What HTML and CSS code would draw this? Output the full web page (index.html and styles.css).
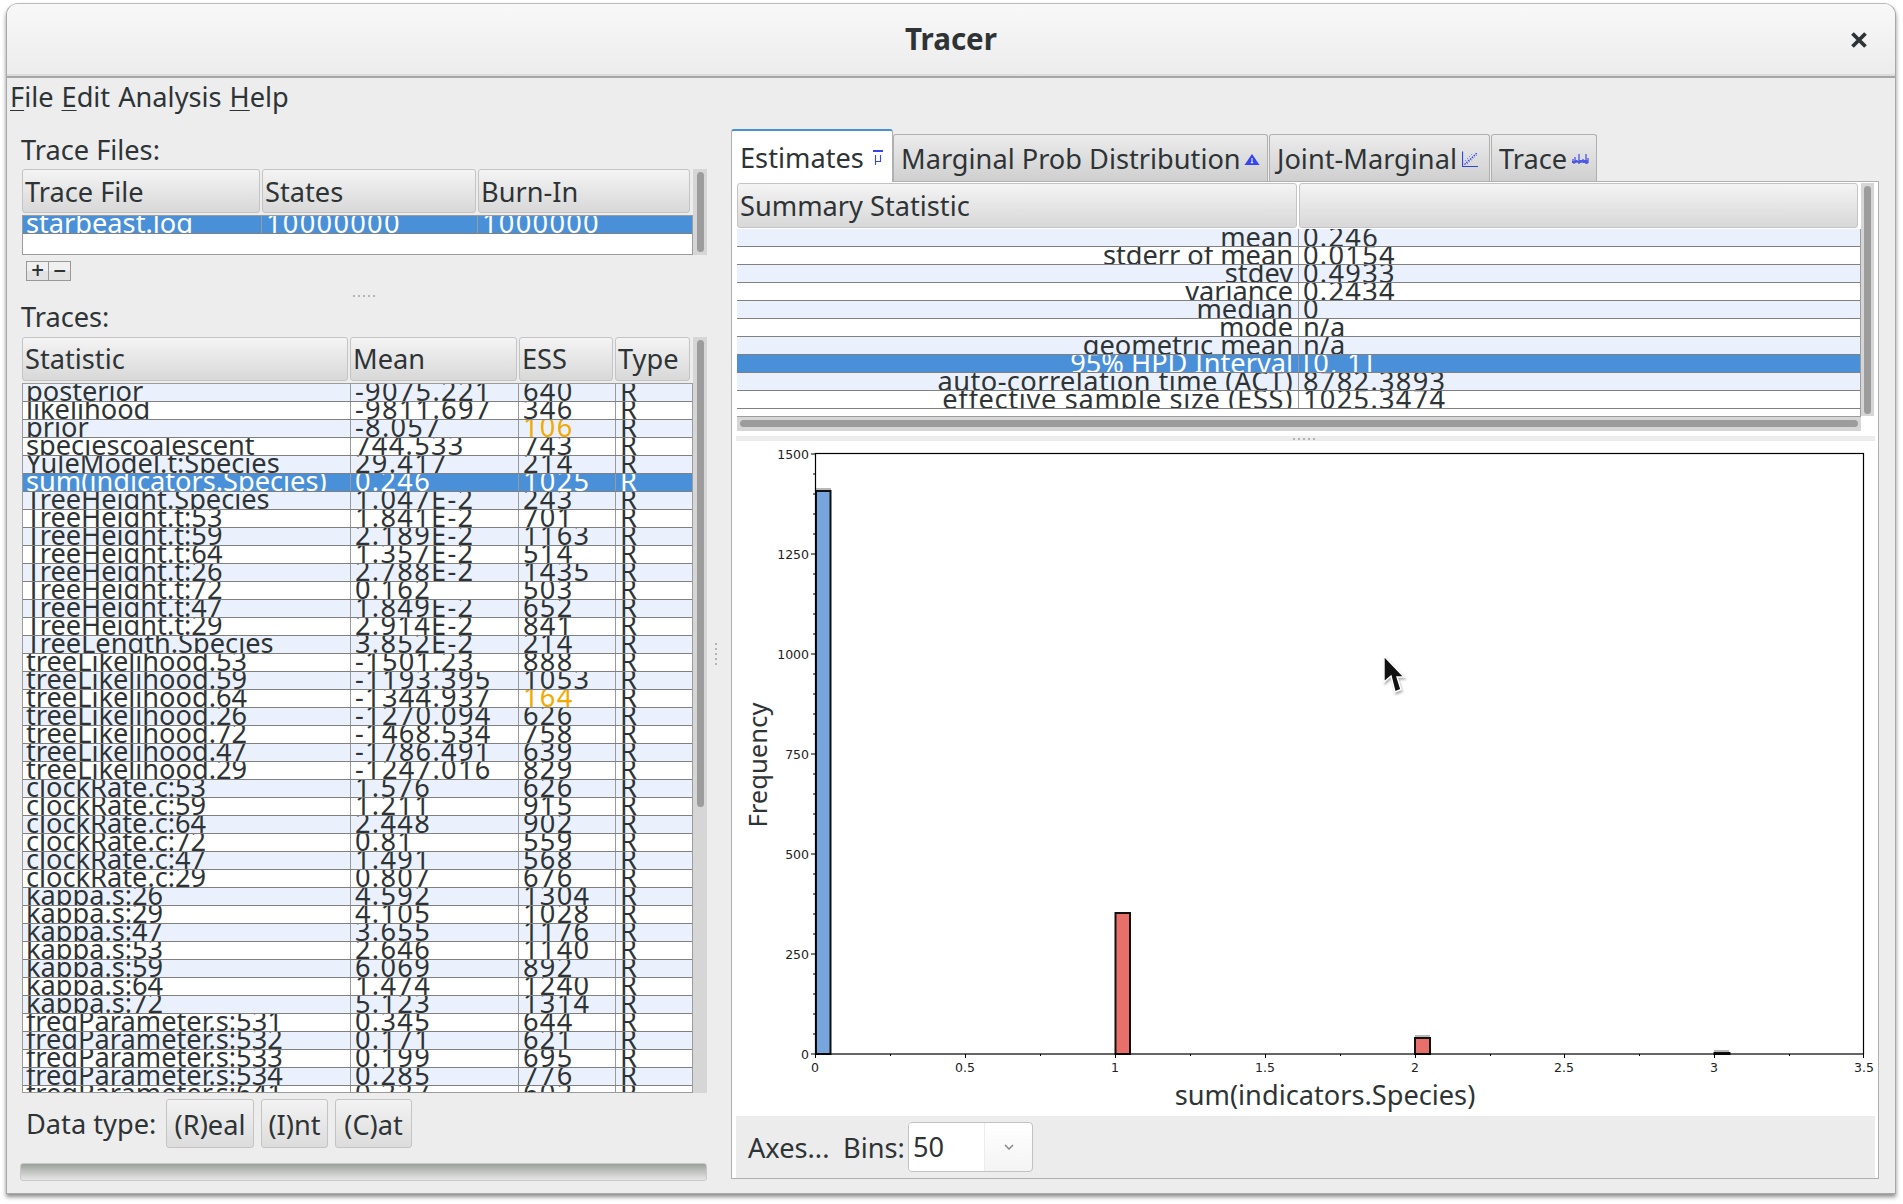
FILE: index.html
```html
<!DOCTYPE html>
<html lang="en">
<head>
<meta charset="utf-8">
<title>Tracer</title>
<link rel="stylesheet" href="styles.css">
</head>
<body>
<div class="window">
  <header class="titlebar">
    <span class="title">Tracer</span>
    <svg class="close" viewBox="0 0 18 18" width="18" height="18"><path d="M2.5 2.5 L15.5 15.5 M15.5 2.5 L2.5 15.5" /></svg>
  </header>
  <nav class="menubar"><span><u>F</u>ile</span> <span><u>E</u>dit</span> <span>Analysis</span> <span><u>H</u>elp</span></nav>
  <main class="main">
    <section class="left">
      <div class="label label-files">Trace Files:</div>
      <div class="tablebox files-box">
        <div class="table">
          <div class="head files-cols"><div class="th">Trace File</div><div class="th">States</div><div class="th">Burn-In</div></div>
          <div class="rows">
            <div class="row files-rowcols sel"><span>starbeast.log</span><span>10000000</span><span>1000000</span></div>
          </div>
        </div>
        <div class="vtrack"><div class="vthumb files-thumb"></div></div>
      </div>
      <div class="addrem"><span>+</span><span>−</span></div>
      <div class="dots dots-left"></div>
      <div class="label label-traces">Traces:</div>
      <div class="tablebox traces-box">
        <div class="table">
          <div class="head traces-cols"><div class="th">Statistic</div><div class="th">Mean</div><div class="th">ESS</div><div class="th">Type</div></div>
          <div class="rows">
            <div class="row traces-rowcols"><span>posterior</span><span>-9075.221</span><span>640</span><span>R</span></div>
            <div class="row traces-rowcols"><span>likelihood</span><span>-9811.697</span><span>346</span><span>R</span></div>
            <div class="row traces-rowcols"><span>prior</span><span>-8.057</span><span class="warn">106</span><span>R</span></div>
            <div class="row traces-rowcols"><span>speciescoalescent</span><span>744.533</span><span>743</span><span>R</span></div>
            <div class="row traces-rowcols"><span>YuleModel.t:Species</span><span>29.417</span><span>214</span><span>R</span></div>
            <div class="row traces-rowcols sel"><span>sum(indicators.Species)</span><span>0.246</span><span>1025</span><span>R</span></div>
            <div class="row traces-rowcols"><span>TreeHeight.Species</span><span>1.047E-2</span><span>243</span><span>R</span></div>
            <div class="row traces-rowcols"><span>TreeHeight.t:53</span><span>1.841E-2</span><span>701</span><span>R</span></div>
            <div class="row traces-rowcols"><span>TreeHeight.t:59</span><span>2.189E-2</span><span>1163</span><span>R</span></div>
            <div class="row traces-rowcols"><span>TreeHeight.t:64</span><span>1.357E-2</span><span>514</span><span>R</span></div>
            <div class="row traces-rowcols"><span>TreeHeight.t:26</span><span>2.788E-2</span><span>1435</span><span>R</span></div>
            <div class="row traces-rowcols"><span>TreeHeight.t:72</span><span>0.162</span><span>503</span><span>R</span></div>
            <div class="row traces-rowcols"><span>TreeHeight.t:47</span><span>1.849E-2</span><span>652</span><span>R</span></div>
            <div class="row traces-rowcols"><span>TreeHeight.t:29</span><span>2.914E-2</span><span>841</span><span>R</span></div>
            <div class="row traces-rowcols"><span>TreeLength.Species</span><span>3.852E-2</span><span>214</span><span>R</span></div>
            <div class="row traces-rowcols"><span>treeLikelihood.53</span><span>-1501.23</span><span>888</span><span>R</span></div>
            <div class="row traces-rowcols"><span>treeLikelihood.59</span><span>-1193.395</span><span>1053</span><span>R</span></div>
            <div class="row traces-rowcols"><span>treeLikelihood.64</span><span>-1344.937</span><span class="warn">164</span><span>R</span></div>
            <div class="row traces-rowcols"><span>treeLikelihood.26</span><span>-1270.094</span><span>626</span><span>R</span></div>
            <div class="row traces-rowcols"><span>treeLikelihood.72</span><span>-1468.534</span><span>758</span><span>R</span></div>
            <div class="row traces-rowcols"><span>treeLikelihood.47</span><span>-1786.491</span><span>639</span><span>R</span></div>
            <div class="row traces-rowcols"><span>treeLikelihood.29</span><span>-1247.016</span><span>829</span><span>R</span></div>
            <div class="row traces-rowcols"><span>clockRate.c:53</span><span>1.576</span><span>626</span><span>R</span></div>
            <div class="row traces-rowcols"><span>clockRate.c:59</span><span>1.211</span><span>915</span><span>R</span></div>
            <div class="row traces-rowcols"><span>clockRate.c:64</span><span>2.448</span><span>902</span><span>R</span></div>
            <div class="row traces-rowcols"><span>clockRate.c:72</span><span>0.81</span><span>559</span><span>R</span></div>
            <div class="row traces-rowcols"><span>clockRate.c:47</span><span>1.491</span><span>568</span><span>R</span></div>
            <div class="row traces-rowcols"><span>clockRate.c:29</span><span>0.807</span><span>676</span><span>R</span></div>
            <div class="row traces-rowcols"><span>kappa.s:26</span><span>4.592</span><span>1304</span><span>R</span></div>
            <div class="row traces-rowcols"><span>kappa.s:29</span><span>4.105</span><span>1028</span><span>R</span></div>
            <div class="row traces-rowcols"><span>kappa.s:47</span><span>3.655</span><span>1176</span><span>R</span></div>
            <div class="row traces-rowcols"><span>kappa.s:53</span><span>2.646</span><span>1140</span><span>R</span></div>
            <div class="row traces-rowcols"><span>kappa.s:59</span><span>6.069</span><span>892</span><span>R</span></div>
            <div class="row traces-rowcols"><span>kappa.s:64</span><span>1.474</span><span>1240</span><span>R</span></div>
            <div class="row traces-rowcols"><span>kappa.s:72</span><span>5.123</span><span>1314</span><span>R</span></div>
            <div class="row traces-rowcols"><span>freqParameter.s:531</span><span>0.345</span><span>644</span><span>R</span></div>
            <div class="row traces-rowcols"><span>freqParameter.s:532</span><span>0.171</span><span>621</span><span>R</span></div>
            <div class="row traces-rowcols"><span>freqParameter.s:533</span><span>0.199</span><span>695</span><span>R</span></div>
            <div class="row traces-rowcols"><span>freqParameter.s:534</span><span>0.285</span><span>776</span><span>R</span></div>
            <div class="row traces-rowcols"><span>freqParameter.s:641</span><span>0.227</span><span>602</span><span>R</span></div>
          </div>
        </div>
        <div class="vtrack"><div class="vthumb traces-thumb"></div></div>
      </div>
      <div class="datatype"><span class="dt-label">Data type:</span><button class="btn btn-r">(R)eal</button><button class="btn btn-i">(I)nt</button><button class="btn btn-c">(C)at</button></div>
      <div class="progress"></div>
    </section>
    <div class="vsplit"></div>
    <section class="right">
      <div class="tabs">
        <div class="tab active tab1">Estimates
          <svg class="ticon" viewBox="0 0 10 15" width="10" height="15"><path d="M0 1H10" stroke="#3346f2" stroke-width="2" fill="none"/><path d="M2.5 5V15M2.5 11.5H7.5M7.5 5V12" stroke="#3346f2" stroke-width="1.1" fill="none"/></svg>
        </div>
        <div class="tab tab2">Marginal Prob Distribution
          <svg class="ticon" viewBox="0 0 16 13" width="16" height="13"><path d="M8 1 L15.5 12 H0.5 Z" fill="#3346f2"/><path d="M6.8 9.7H9.2M8 5V9.7" stroke="#fff" stroke-width="1"/></svg>
        </div>
        <div class="tab tab3">Joint-Marginal
          <svg class="ticon" viewBox="0 0 16 16" width="16" height="16"><path d="M0.5 0.5V15.5H16" stroke="#2f42f0" stroke-width="1.2" fill="none"/><path d="M2.5 13.5L15 2" stroke="#2f42f0" stroke-width="1.3" stroke-dasharray="1.5 1" fill="none"/><path d="M5 13L15 4M3 10L11 2" stroke="#5565f5" stroke-width="1" stroke-dasharray="1 2" fill="none"/></svg>
        </div>
        <div class="tab tab4">Trace
          <svg class="ticon" viewBox="0 0 17 12" width="17" height="12"><path d="M0 8V10M1 6V10M2 8V11M3 4V10M4 7V10M5 7V9M6 8V10M7 1V11M8 7V10M9 7V10M10 7V9M11 6V10M12 7V10M13 7V10M14 1V11M15 7V11M16 5V10" stroke="#1e2ee8" stroke-width="1" fill="none"/></svg>
        </div>
      </div>
      <div class="panel">
        <div class="summary">
          <div class="table">
            <div class="head summary-cols"><div class="th">Summary Statistic</div><div class="th"></div></div>
            <div class="rows">
              <div class="row summary-rowcols"><span class="key">mean</span><span>0.246</span></div>
              <div class="row summary-rowcols"><span class="key">stderr of mean</span><span>0.0154</span></div>
              <div class="row summary-rowcols"><span class="key">stdev</span><span>0.4933</span></div>
              <div class="row summary-rowcols"><span class="key">variance</span><span>0.2434</span></div>
              <div class="row summary-rowcols"><span class="key">median</span><span>0</span></div>
              <div class="row summary-rowcols"><span class="key">mode</span><span class="plain">n/a</span></div>
              <div class="row summary-rowcols"><span class="key">geometric mean</span><span class="plain">n/a</span></div>
              <div class="row summary-rowcols sel"><span class="key">95% HPD Interval</span><span>[0, 1]</span></div>
              <div class="row summary-rowcols"><span class="key wide">auto-correlation time (ACT)</span><span>8782.3893</span></div>
              <div class="row summary-rowcols"><span class="key wider">effective sample size (ESS)</span><span>1025.3474</span></div>
            </div>
            <div class="htrack"><div class="hthumb"></div></div>
          </div>
          <div class="vtrack summary-track"><div class="vthumb summary-thumb"></div></div>
        </div>
        <div class="hsplit"><div class="dots"></div></div>
        <svg class="chart" viewBox="736 441 1139 675" width="1139" height="675">
          <rect class="c-shadow" x="1415" y="1035" width="15" height="2"/>
          <rect class="c-shadow" x="1714" y="1050" width="15" height="2"/>
          <rect class="c-shadow" x="816" y="488" width="15" height="2"/>
          <rect class="c-blue" x="816" y="491" width="14.5" height="563"/>
          <rect class="c-red" x="1115.5" y="913" width="14.5" height="141"/>
          <rect class="c-red" x="1415" y="1038" width="15" height="16"/>
          <rect class="c-red" x="1714.5" y="1053" width="15" height="1"/>
          <rect class="c-frame" x="815.5" y="453.5" width="1048" height="600.5"/>
          <path class="c-tick" d="M811 1054H815M811 954H815M811 854H815M811 754H815M811 654H815M811 554H815M811 454H815M813 1034H815M813 1014H815M813 994H815M813 974H815M813 934H815M813 914H815M813 894H815M813 874H815M813 834H815M813 814H815M813 794H815M813 774H815M813 734H815M813 714H815M813 694H815M813 674H815M813 634H815M813 614H815M813 594H815M813 574H815M813 534H815M813 514H815M813 494H815M813 474H815"/>
          <path class="c-tick" d="M815.5 1054V1058M965.5 1054V1058M1115.5 1054V1058M1265.5 1054V1058M1415.5 1054V1058M1564.5 1054V1058M1714.5 1054V1058M1863.5 1054V1058M890.5 1054V1056M1040.5 1054V1056M1190.5 1054V1056M1340.5 1054V1056M1490.5 1054V1056M1639.5 1054V1056M1789.5 1054V1056"/>
          <g class="c-ylabels">
            <text x="809" y="1059">0</text><text x="809" y="959">250</text><text x="809" y="859">500</text><text x="809" y="759">750</text><text x="809" y="659">1000</text><text x="809" y="559">1250</text><text x="809" y="459">1500</text>
          </g>
          <g class="c-xlabels">
            <text x="815" y="1072">0</text><text x="965" y="1072">0.5</text><text x="1115" y="1072">1</text><text x="1265" y="1072">1.5</text><text x="1415" y="1072">2</text><text x="1564" y="1072">2.5</text><text x="1714" y="1072">3</text><text x="1864" y="1072">3.5</text>
          </g>
          <text class="c-axis c-xaxis" x="1325" y="1105">sum(indicators.Species)</text>
          <text class="c-axis c-yaxis" transform="translate(767 765) rotate(-90)">Frequency</text>
        </svg>
        <div class="footer">
          <span class="axes">Axes...</span><span class="bins">Bins:</span>
          <div class="combo"><span class="combo-val">50</span><span class="combo-btn"><svg viewBox="0 0 10 6" width="10" height="6"><path d="M1 1L5 5L9 1" stroke="#888" stroke-width="1.5" fill="none"/></svg></span></div>
        </div>
      </div>
    </section>
  </main>
  <svg class="cursor" viewBox="0 0 24 38" width="24" height="38"><path d="M1 1V27L8 21L12 37L18 34.5L14 22H21Z" fill="#111" stroke="#fff" stroke-width="1.4"/></svg>
</div>
</body>
</html>
```
FILE: styles.css
```css
* { box-sizing: border-box; }
html, body { margin: 0; height: 100%; background: #fff; }
body { font-family: "Noto Sans", "Open Sans", sans-serif; color: #2e3436; font-size: 27.2px; overflow: hidden; }
.window { position: relative; margin: 3px 0 0 6px; width: 1890px; height: 1191px; background: #ededed; border: 1px solid #a8a8a8; border-top-color: #bbb; border-radius: 12px 12px 0 0; box-shadow: 0 3px 4px rgba(0,0,0,.45); display: flex; flex-direction: column; overflow: hidden; }
.titlebar { height: 74px; flex: none; display: flex; align-items: center; justify-content: center; position: relative; background: linear-gradient(#f8f8f8, #ececec); border-bottom: 2px solid #a6a6a6; box-shadow: inset 0 -2px 0 #dcdcdc; padding-bottom: 2px; }
.title { font-weight: 700; font-size: 29.5px; color: #2e3436; line-height: 40px; }
.close { position: absolute; right: 27px; top: 27px; stroke: #2e3436; stroke-width: 3.8; }
.menubar { height: 34px; flex: none; padding: 2px 0 0 3px; line-height: 34px; display: flex; gap: 8px; }
.menubar u { text-underline-offset: 3px; text-decoration-thickness: 1px; }
.main { flex: 1; display: flex; min-height: 0; }
.left { width: 700px; flex: none; padding-left: 15px; display: flex; flex-direction: column; }
.vsplit { width: 24px; flex: none; position: relative; }
.vsplit::after { content: ""; position: absolute; left: 8px; top: 531px; width: 2px; height: 24px; background: repeating-linear-gradient(#b5b5b5 0 2px, transparent 2px 5px); }
.label { line-height: 34px; margin-left: -1px; }
.label-files { height: 57px; padding-top: 21px; }
.label-traces { height: 40px; padding-top: 3px; }
.tablebox { display: flex; flex: none; }
.files-box { height: 86px; }
.traces-box { height: 756px; }
.table { width: 671px; display: flex; flex-direction: column; min-height: 0; }
.head { flex: none; height: 44px; margin-bottom: 2px; padding-right: 3px; }
.th { background: linear-gradient(#f4f4f4, #d8d8d8); border: 1px solid #c4c4c4; border-radius: 3px; line-height: 43px; padding-left: 2px; margin-right: 2px; overflow: hidden; white-space: nowrap; }
.traces-cols .th { line-height: 42px; }
.files-cols { display: grid; grid-template-columns: 240px 216px 1fr; }
.files-rowcols { display: grid; grid-template-columns: 238px 216px 1fr; line-height: 14px; }
.traces-cols { display: grid; grid-template-columns: 328px 169px 96px 1fr; }
.traces-rowcols { display: grid; grid-template-columns: 327px 168px 97px 1fr; line-height: 13px; }
.summary-cols { display: grid; grid-template-columns: 562px 1fr; }
.summary-rowcols { display: grid; grid-template-columns: 561px 1fr; line-height: 16px; }
.head .th:last-child { margin-right: 0; }
.rows { flex: 1; min-height: 0; background: #fff; border: 1px solid #9c9c9c; overflow: hidden; }
.row { height: 18px; border-bottom: 1px solid #808080; overflow: hidden; }
.row:nth-child(odd) { background: #ebf1fc; }
.row > span { display: block; height: 17px; overflow: hidden; padding-left: 4px; white-space: nowrap; border-left: 1px solid #9a9a9a; }
.row > span:first-child { border-left: 0; padding-left: 3px; }
.files-rowcols > span + span, .summary-rowcols > span + span, .traces-rowcols > span:nth-child(2), .traces-rowcols > span:nth-child(3) { letter-spacing: 1.3px; }
.summary-rowcols > span.plain { letter-spacing: 0; }
.row.sel { background: #4a90d9; color: #fff; }
.row .warn { color: #f2a900; }
.summary .row > span.key { text-align: right; padding-right: 5px; padding-left: 0; }
.summary .row > span.wide { letter-spacing: .45px; }
.summary .row > span.wider { letter-spacing: .7px; }
.vtrack { width: 14px; background: #d6d6d6; padding: 3px 4px; flex: none; }
.vthumb { width: 7px; background: #9c9c9c; border-radius: 4px; }
.files-thumb { height: 80px; }
.traces-thumb { height: 467px; }
.addrem { width: 45px; height: 20px; margin: 6px 0 0 4px; display: flex; flex: none; border: 1px solid #999; background: linear-gradient(#f0f0f0 50%, #e2e2e2 50%); font-family: "DejaVu Sans", sans-serif; font-size: 17px; font-weight: 700; line-height: 17px; text-align: center; }
.addrem span { flex: 1; }
.addrem span + span { border-left: 1px solid #999; }
.dots { width: 25px; height: 2px; background: repeating-linear-gradient(90deg, #b5b5b5 0 2px, transparent 2px 5px); }
.dots-left { margin: 14px 0 0 331px; flex: none; }
.datatype { height: 70px; padding: 6px 0 0 4px; display: flex; align-items: flex-start; flex: none; }
.dt-label { line-height: 50px; width: 140px; flex: none; white-space: nowrap; }
.btn { font: inherit; color: inherit; height: 49px; padding: 1px 0 0; text-align: center; background: linear-gradient(#f3f3f3, #dcdcdc); border: 1px solid #c4c4c4; border-radius: 3px; margin-right: 7px; white-space: nowrap; }
.btn-r { width: 88px; }
.btn-i { width: 67px; }
.btn-c { width: 77px; }
.progress { height: 18px; margin-left: -2px; width: 687px; background: linear-gradient(#9aa09c, #b8bbb8 35%, #e6e6e6); border: 1px solid #c8c8c8; border-radius: 3px; flex: none; }
.right { flex: 1; min-width: 0; padding: 17px 0 0 0; display: flex; flex-direction: column; }
.tabs { height: 52px; flex: none; display: flex; align-items: flex-end; position: relative; z-index: 1; }
.tab { height: 47px; background: linear-gradient(#ececec, #cfcfcf); border: 1px solid #b0b0b0; border-bottom: 0; border-radius: 3px 3px 0 0; display: flex; align-items: center; padding: 2px 0 0 7px; line-height: 44px; white-space: nowrap; gap: 3px; }
.tab.active { height: 53px; margin-bottom: -1px; padding-left: 8px; background: #fff; border-top: 2px solid #4a90d9; gap: 9px; }
.tab1 { width: 162px; }
.tab2 { width: 375px; }
.tab3 { width: 221px; margin-left: 1px; gap: 5px; }
.tab4 { width: 106px; margin-left: 1px; gap: 5px; }
.ticon { flex: none; }
.panel { width: 1148px; height: 998px; background: #fff; border: 1px solid #b0b0b0; padding: 1px 3px 0 4px; display: flex; flex-direction: column; }
.summary { display: flex; height: 247px; flex: none; margin-left: 1px; }
.summary .table { width: 1124px; }
.summary .head { height: 45px; margin-bottom: 1px; }
.summary .rows { flex: none; height: 188px; border-width: 0 1px 1px 0; background: #fff; }
.summary-track { width: 13px; height: 233px; background: #d6d6d6; padding: 3px; }
.summary-thumb { height: 228px; }
.htrack { height: 14px; background: #d6d6d6; padding: 3px; flex: none; }
.hthumb { height: 7px; background: #9c9c9c; border-radius: 4px; }
.hsplit { height: 5px; margin-top: 6px; background: #ececec; flex: none; display: flex; justify-content: center; align-items: center; width: 1139px; }
.chart { display: block; flex: none; background: #fff; }
.c-frame { fill: none; stroke: #000; stroke-width: 1.2; }
.c-blue { fill: #78a5dc; stroke: #111; stroke-width: 2; }
.c-red { fill: #e8706a; stroke: #111; stroke-width: 2; }
.c-shadow { fill: #b8b8b8; }
.c-tick { stroke: #000; stroke-width: 1; fill: none; }
.c-ylabels text { font-family: "DejaVu Sans", sans-serif; font-size: 12.5px; text-anchor: end; fill: #222; }
.c-xlabels text { font-family: "DejaVu Sans", sans-serif; font-size: 12.5px; text-anchor: middle; fill: #222; }
.c-axis { text-anchor: middle; fill: #2e3436; }
.c-xaxis { font-size: 27.2px; }
.c-yaxis { font-size: 25.6px; }
.footer { height: 62px; width: 1139px; flex: none; background: #ececec; display: flex; align-items: center; padding-left: 12px; }
.axes { width: 95px; flex: none; white-space: nowrap; }
.bins { width: 65px; flex: none; }
.combo { width: 125px; height: 50px; background: linear-gradient(#fff, #f4f4f4); border: 1px solid #c2c2c2; border-radius: 4px; display: flex; align-items: center; overflow: hidden; }
.combo-val { width: 75px; padding-left: 4px; line-height: 48px; background: #fff; }
.combo-btn { flex: 1; height: 100%; border-left: 1px solid #ececec; display: flex; align-items: center; justify-content: center; }
.cursor { position: absolute; left: 1376px; top: 651px; filter: drop-shadow(1px 2px 1px rgba(0,0,0,.3)); }
```
